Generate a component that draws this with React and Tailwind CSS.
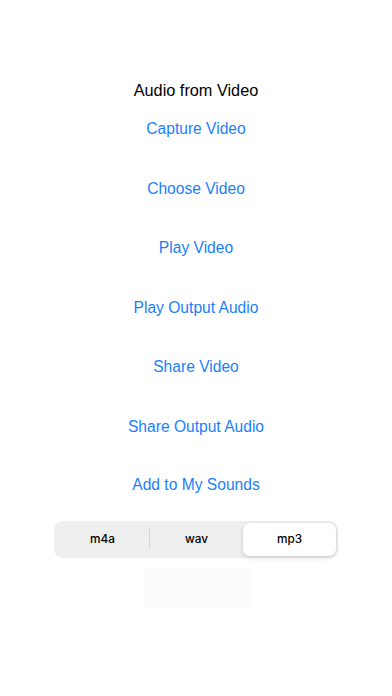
import React from "react";

const links = [
  "Capture Video",
  "Choose Video",
  "Play Video",
  "Play Output Audio",
  "Share Video",
  "Share Output Audio",
];

export default function App() {
  return (
    <div
      className="w-[392px] h-[696px] bg-white flex flex-col items-center"
      style={{ fontFamily: "'Liberation Sans', Arial, sans-serif" }}
    >
      <div className="mt-[79px] h-[22px] leading-[22px] text-[16.3px] text-black">
        Audio from Video
      </div>
      <div className="mt-[17px] flex flex-col items-center gap-[37.6px]">
        {links.map((l) => (
          <div key={l} className="h-[22px] leading-[22px] text-[15.6px] text-[#1a7ffb]">
            {l}
          </div>
        ))}
      </div>
      <div className="mt-[36px] h-[22px] leading-[22px] text-[15.6px] text-[#1a7ffb]">
        Add to My Sounds
      </div>
      <div
        className="mt-[25px] w-[284px] h-[37px] bg-[#eeeeef] rounded-[9px] p-[2px] flex items-stretch"
        style={{ fontFamily: "Inter, 'Liberation Sans', sans-serif" }}
      >
        <div className="flex-1 flex items-center justify-center text-[11.8px] font-medium text-black">
          m4a
        </div>
        <div className="w-px my-[6px] bg-[#d6d6d8]" />
        <div className="flex-1 flex items-center justify-center text-[11.8px] font-medium text-black">
          wav
        </div>
        <div className="flex-1 flex items-center justify-center text-[11.8px] font-medium text-black bg-white rounded-[7px] shadow-[0_2px_5px_rgba(0,0,0,0.12),0_0_0_0.5px_rgba(0,0,0,0.04)]">
          mp3
        </div>
      </div>
      <div className="mt-[9px] w-[107px] h-[41px] bg-[#fcfcfc]" />
    </div>
  );
}
